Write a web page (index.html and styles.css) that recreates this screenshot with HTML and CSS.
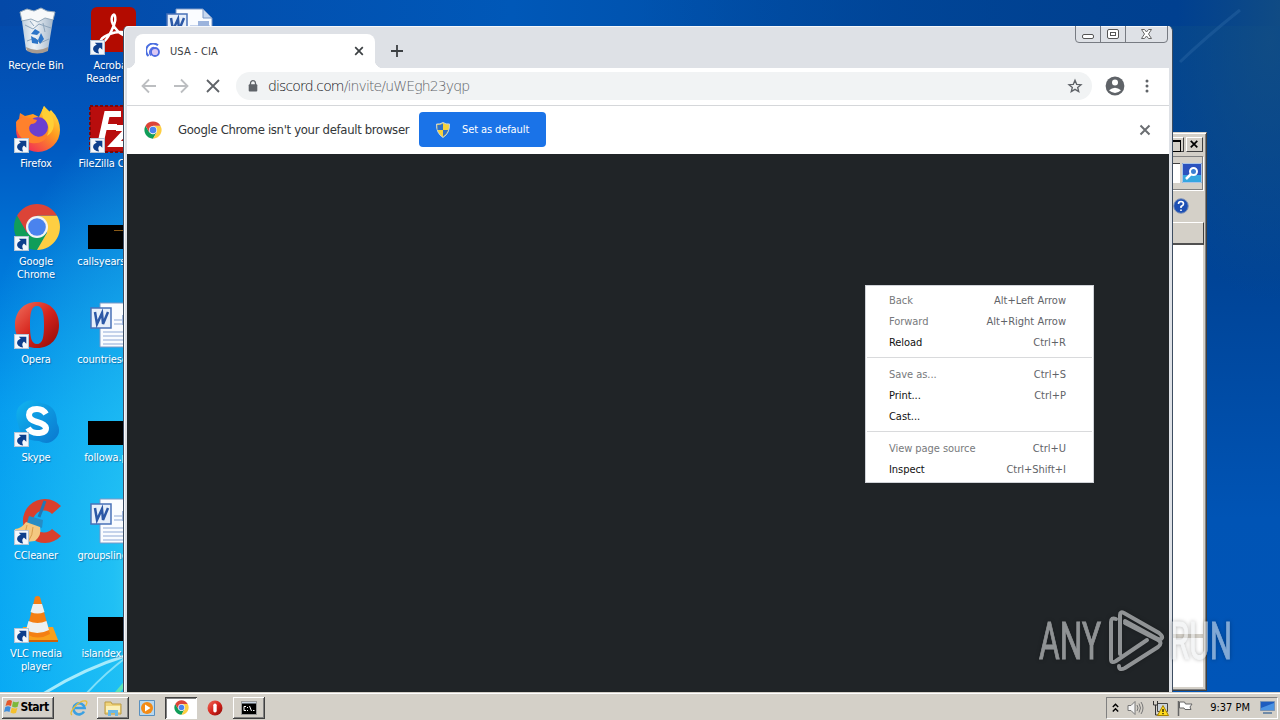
FILE: index.html
```
<!DOCTYPE html>
<html lang="en">
<head>
    <meta charset="utf-8">
    <title>USA - CIA</title>
    <link rel="stylesheet" href="styles.css">
</head>
<body>
    <svg class="defs" width="0" height="0">
        <defs>
            <symbol id="shortcut" viewBox="0 0 14 14">
                <path d="M0 0h14v14H0z" fill="#f4f8fc"/>
                <path d="M.5.5h13v13H.5z" fill="none" stroke="#b5c5d6"/>
                <path d="M4.500 2.500H11.500V9L9.300 7C7.500 8.500 7.300 10 8.500 12.500 5 12.500 2.300 10 3 7.500c.4-1.600 1.700-2.500 3.300-3z" fill="#0d3f8c"/>
            </symbol>
            <symbol id="chrome" viewBox="0 0 48 48">
                <path d="M4.100 12.500A23 23 0 0 0 24 47l10-17.300L24 35l-10-5.300z" fill="#109d59"/>
                <path d="M43.900 12.500H24l10 17.200L24 47A23 23 0 0 0 43.900 12.500z" fill="#fdce42"/>
                <path d="M24 12.500h19.900A23 23 0 0 0 4.100 12.500L14 29.700z" fill="#dc4437"/>
                <circle cx="24" cy="24" r="11" fill="#f3f3f3"/>
                <circle cx="24" cy="24" r="8.800" fill="#4a83ee"/>
            </symbol>
            <symbol id="word" viewBox="0 0 48 48">
                <path d="M11 2h27l9 9v35H11z" fill="#fafcff" stroke="#7b98c6"/>
                <path d="M38 2l9 9h-9z" fill="#c8d8ef" stroke="#7b98c6"/>
                <path d="M25 19h20M25 23h20M14 31h31M14 35h31M14 39h31M14 43h31" stroke="#8fa9d6"/>
                <path d="M33 14h11v10H33z" fill="#9bb3dc"/>
                <path d="M2 7h20v20H2z" fill="#e7effa" stroke="#4a72b8" stroke-width="1.500"/>
                <path d="M6 11l2 12 5-11 1 11 5-12" fill="none" stroke="#2c58a6" stroke-width="2.500"/>
            </symbol>
            <linearGradient id="fire" x1="1" y1="0" x2=".2" y2="1">
                <stop offset="0" stop-color="#fff14a"/><stop offset=".45" stop-color="#ff9a1f"/><stop offset="1" stop-color="#f0225d"/>
            </linearGradient>
            <linearGradient id="red" x1="0" y1="0" x2="1" y2="1">
                <stop offset="0" stop-color="#f0705e"/><stop offset=".5" stop-color="#d6241c"/><stop offset="1" stop-color="#8d0a08"/>
            </linearGradient>
            <linearGradient id="skype" x1="0" y1="0" x2="1" y2="1">
                <stop offset="0" stop-color="#10b4f0"/><stop offset="1" stop-color="#0a78cf"/>
            </linearGradient>
            <linearGradient id="bin" x1="0" y1="0" x2="1" y2="0">
                <stop offset="0" stop-color="#b9cbdc"/><stop offset=".4" stop-color="#f0f4f7"/><stop offset="1" stop-color="#9fb3c8"/>
            </linearGradient>
        </defs>
    </svg>

    <div class="desktop">
        <svg class="streaks" viewBox="0 0 1280 692">
            <path d="M40 696Q80 670 128 655" stroke="#a5ebfc" stroke-width="3"/>
            <path d="M86 694Q104 674 128 656" stroke="#7fe0fa" stroke-width="2"/>
            <path d="M116 694l12-14" stroke="#5fe3b4" stroke-width="4"/>
            <path d="M1180 62Q1205 38 1240 10" stroke="#2a66a3" stroke-width="3" opacity=".45"/>
        </svg>

        <div class="icons">
            <div class="icon">
                <svg viewBox="0 0 48 48">
                    <path d="M8 7l5 36q11 5 22 0l6-36z" fill="url(#bin)"/>
                    <path d="M7 5l7-3 7 2 7-3 6 3 8 1-2 8-8-2-7 4-7-3-9 2z" fill="#f7f9fa" stroke="#94a9ba"/>
                    <path d="M12 18l8 4 6-5 12 4M14 34l8-3 5 5 9-4M30 16l2 9M17 14l4 5" fill="none" stroke="#8ca4bb"/>
                    <path d="M18 27l4-5 5 3-3 3zM18 29l1 7 6 1v-4zM28 26l3 6-4 5-2-4z" fill="#2d75c8"/>
                    <path d="M13 40q11 6 22 0v4q-11 5-21 0z" fill="#a79b91"/>
                </svg>
                <span>Recycle Bin</span>
            </div>
            <div class="icon">
                <svg viewBox="0 0 48 48">
                    <path d="M31 1q3 4 4 7l3-3q9 9 9 20a22 22 0 0 1-44 0q0-8 3-11l1-6 5 3 8-2 6 3z" fill="url(#fire)"/>
                    <circle cx="25" cy="22" r="10" fill="#6b3fd0"/>
                    <path d="M3 17q4-6 13-4l8 2q-1 4-6 4-4 4 0 9 7 7 17 2-5 10-17 8Q3 34 3 17z" fill="#ff812c"/>
                    <path d="M31 1q-5 9 2 15 5 7 1 15 12-8 3-24z" fill="#ffcf35"/>
                </svg>
                <svg class="arrow"><use href="#shortcut"/></svg>
                <span>Firefox</span>
            </div>
            <div class="icon">
                <svg><use href="#chrome"/></svg>
                <svg class="arrow"><use href="#shortcut"/></svg>
                <span>Google<br>Chrome</span>
            </div>
            <div class="icon">
                <svg viewBox="0 0 48 48">
                    <path fill-rule="evenodd" d="M24 1C10 1 2 11 2 24s8 23 22 23 22-10 22-23S38 1 24 1zm0 4c6 0 7 8 7 19s-1 19-7 19-7-8-7-19 1-19 7-19z" fill="url(#red)"/>
                </svg>
                <svg class="arrow"><use href="#shortcut"/></svg>
                <span>Opera</span>
            </div>
            <div class="icon">
                <svg viewBox="0 0 48 48">
                    <path d="M14 2q8-2 14 2 16 2 16 20 5 9-2 16-7 7-16 2Q8 42 5 25-1 8 14 2z" fill="url(#skype)"/>
                    <path d="M33 15q-3-5-9-5-8 0-8 6 0 5 8 7t9 6q0 5-9 5-6 0-9-5" fill="none" stroke="#fff" stroke-width="6"/>
                </svg>
                <svg class="arrow"><use href="#shortcut"/></svg>
                <span>Skype</span>
            </div>
            <div class="icon">
                <svg viewBox="0 0 48 48">
                    <path d="M48 9A22 22 0 1 0 48 39l-9-7a11 11 0 1 1 0-15z" fill="#d9402d"/>
                    <path d="M32 4l-6 16" stroke="#2277b4" stroke-width="3"/>
                    <path d="M16 19l14 4-1 8-15-5z" fill="#278cc4"/>
                    <path d="M13 25l14 5q2 8-5 14l-18 2Q0 38 2 32q6 0 11-7z" fill="#f4c880"/>
                    <path d="M14 28q-1 10-6 16M20 30q0 8-5 15" fill="none" stroke="#d79c4c"/>
                </svg>
                <svg class="arrow"><use href="#shortcut"/></svg>
                <span>CCleaner</span>
            </div>
            <div class="icon">
                <svg viewBox="0 0 48 48">
                    <path d="M10 32h30l5 13H6z" fill="#f9a01c"/>
                    <path d="M6 45h39v2H6z" fill="#d06209"/>
                    <path d="M22 2q2.500-2 5 0l10 37q-12 7-24 0z" fill="#f47f13"/>
                    <path d="M20 9h9l2.500 8q-7 3-14 0zM15.500 26q9 4 18 0l2.500 9q-12 6-23 0z" fill="#edf0f0"/>
                </svg>
                <svg class="arrow"><use href="#shortcut"/></svg>
                <span>VLC media<br>player</span>
            </div>

            <div class="icon">
                <svg viewBox="0 0 48 48">
                    <rect x="2" width="45" height="45" rx="6" fill="#b30b00"/>
                    <path d="M13 35c-5-2 6-9 17-10s10 6 4 3S21 16 23 10s5 0 2 8-9 18-12 17z" fill="none" stroke="#fff" stroke-width="2.500"/>
                </svg>
                <svg class="arrow"><use href="#shortcut"/></svg>
                <span>Acrobat<br>Reader DC</span>
            </div>
            <div class="icon">
                <svg viewBox="0 0 48 48">
                    <path d="M1 1h46v46H1z" fill="#b80d0d" stroke="#7e0808" stroke-width="2" stroke-dasharray="3 2"/>
                    <path d="M32 9H18l-6 27M15 22h13M27 23h13L25 39h15" fill="none" stroke="#fff" stroke-width="6"/>
                </svg>
                <svg class="arrow"><use href="#shortcut"/></svg>
                <span>FileZilla Client</span>
            </div>
            <div class="icon">
                <div class="thumb"><i></i></div>
                <span>callsyears.png</span>
            </div>
            <div class="icon">
                <svg><use href="#word"/></svg>
                <span>countriesco.rtf</span>
            </div>
            <div class="icon">
                <div class="thumb"></div>
                <span>followa.png</span>
            </div>
            <div class="icon">
                <svg><use href="#word"/></svg>
                <span>groupslines.rtf</span>
            </div>
            <div class="icon">
                <div class="thumb"></div>
                <span>islandex.png</span>
            </div>

            <div class="icon">
                <svg><use href="#word"/></svg>
            </div>
        </div>

        <div class="explorer">
            <div class="explorer-title">
                <b class="max"></b>
                <b class="x"><svg viewBox="0 0 16 15"><path d="M4 3l7 7M11 3l-7 7" stroke="#000" stroke-width="1.800"/></svg></b>
            </div>
            <div class="explorer-search">
                <i></i>
                <svg viewBox="0 0 20 20">
                    <path d="M0 0h20v20H0z" fill="#2b52be"/><path d="M0 12h20v8H0z" fill="#36a6e0"/>
                    <path d="M.5.5h19v19H.5z" fill="none" stroke="#a9c3e6"/>
                    <path d="M9 11l-5 5" stroke="#fff" stroke-width="2.500"/>
                    <circle cx="11.500" cy="8.500" r="3.500" fill="#3b7fd2" stroke="#fff" stroke-width="2"/>
                </svg>
            </div>
            <div class="explorer-help">
                <svg viewBox="0 0 16 16">
                    <circle cx="8" cy="8" r="7.300" fill="#1d4fb4" stroke="#8094b8"/>
                    <path d="M5.500 6q0-2.500 2.500-2.500T10.500 6Q10.500 7.300 8 8.500V10M8 11.500V13" fill="none" stroke="#fff" stroke-width="1.600"/>
                </svg>
            </div>
            <div class="explorer-head"></div>
            <div class="explorer-body"></div>
            <div class="explorer-status"></div>
        </div>

        <div class="browser">
            <div class="tabs">
                <div class="tab">
                    <svg width="16" height="16" viewBox="0 0 16 16" fill="none">
                        <path d="M2.500 13A6.700 6.700 0 0 1 12 2.300" stroke="#4a6ee0" stroke-width="2"/>
                        <path d="M5 12.500A4.800 4.800 0 0 1 8 4.500" stroke="#5b72e8" stroke-width="1.600"/>
                        <circle cx="9" cy="9" r="4" fill="#dcc8f3" stroke="#4f6be2" stroke-width="1.800"/>
                    </svg>
                    <span>USA - CIA</span>
                    <svg width="10" height="10" viewBox="0 0 10 10"><path d="M1.200 1.200l7.600 7.600M8.800 1.200L1.200 8.800" stroke="#3c4043" stroke-width="1.700"/></svg>
                </div>
                <svg class="plus" width="12" height="12" viewBox="0 0 12 12"><path d="M6 0v12M0 6h12" stroke="#3c4043" stroke-width="1.800"/></svg>
                <svg class="controls" width="93" height="17" viewBox="0 0 93 17" fill="none" stroke="#777b82">
                    <path d="M.5 0v13q0 3.500 3.500 3.500h85q3.500 0 3.500-3.500V0M25.500 0v16M50.500 0v16"/>
                    <rect x="7.500" y="8.500" width="11" height="4" rx="1.500" fill="#fff" stroke="#555"/>
                    <rect x="32.500" y="3.500" width="11" height="9" rx="1.500" fill="#fff" stroke="#555"/>
                    <rect x="35.500" y="6.500" width="5" height="3" stroke="#555"/>
                    <path d="M66.500 3.500h3l2 2.500 2-2.500h3L73.500 8l3 4.500h-3l-2-2.500-2 2.500h-3l3-4.500z" fill="#fff" stroke="#666"/>
                </svg>
            </div>
            <div class="toolbar">
                <svg width="16" height="16" viewBox="0 0 16 16"><path d="M15 8H2M8 1.500L1.500 8 8 14.500" fill="none" stroke="#bcbec1" stroke-width="1.800"/></svg>
                <svg width="16" height="16" viewBox="0 0 16 16"><path d="M1 8h13M8 1.500L14.500 8 8 14.500" fill="none" stroke="#bcbec1" stroke-width="1.800"/></svg>
                <svg width="16" height="16" viewBox="0 0 16 16"><path d="M2 2l12 12M14 2L2 14" stroke="#5f6368" stroke-width="1.800"/></svg>
                <div class="omnibox">
                    <svg width="10" height="12" viewBox="0 0 10 12"><path d="M2.500 5V3.200a2.500 2.500 0 0 1 5 0V5" fill="none" stroke="#5f6368" stroke-width="1.300"/><rect x=".7" y="4.300" width="8.600" height="7.200" rx="1" fill="#5f6368"/></svg>
                    <span class="url"><b>discord.com</b>/invite/uWEgh23yqp</span>
                    <svg width="16" height="16" viewBox="0 0 24 24"><path d="M12 3.500l2.500 6 6.500.5-5 4.200 1.600 6.300L12 17.100l-5.600 3.400L8 14.200 3 10l6.500-.5z" fill="none" stroke="#5f6368" stroke-width="2"/></svg>
                </div>
                <svg width="20" height="20" viewBox="0 0 20 20"><circle cx="10" cy="10" r="9.400" fill="#5f6368"/><circle cx="10" cy="6.600" r="3" fill="#fff"/><path d="M4 14.300q6-5 12 0-6 5.500-12 0z" fill="#fff"/></svg>
                <svg width="4" height="14" viewBox="0 0 4 14" fill="#5f6368"><circle cx="2" cy="2" r="1.500"/><circle cx="2" cy="7" r="1.500"/><circle cx="2" cy="12" r="1.500"/></svg>
            </div>
            <div class="infobar">
                <svg width="18" height="18"><use href="#chrome"/></svg>
                <span class="info-text">Google Chrome isn't your default browser</span>
                <button class="default-btn">
                    <svg width="14" height="16" viewBox="0 0 14 16">
                        <path d="M7 .5q3 2 6.500 1.500Q14 11 7 15.500 0 11 .5 2 4 2.500 7 .5z" fill="#f7d33c" stroke="#c5d3df"/>
                        <path d="M7 1.500V8H1.500L1.300 3Q4 3.200 7 1.500zM7 8h5.200Q11 12 7 14.500z" fill="#2e71c9"/>
                    </svg>
                    <span>Set as default</span>
                </button>
                <svg class="close" width="12" height="12" viewBox="0 0 12 12"><path d="M1.500 1.500l9 9M10.500 1.500l-9 9" stroke="#6b6e72" stroke-width="2"/></svg>
            </div>
            <div class="page"></div>
        </div>

        <div class="menu">
            <div class="item off"><span>Back</span><kbd>Alt+Left Arrow</kbd></div>
            <div class="item off"><span>Forward</span><kbd>Alt+Right Arrow</kbd></div>
            <div class="item"><span>Reload</span><kbd>Ctrl+R</kbd></div>
            <hr>
            <div class="item off"><span>Save as...</span><kbd>Ctrl+S</kbd></div>
            <div class="item"><span>Print...</span><kbd>Ctrl+P</kbd></div>
            <div class="item"><span>Cast...</span></div>
            <hr>
            <div class="item off"><span>View page source</span><kbd>Ctrl+U</kbd></div>
            <div class="item"><span>Inspect</span><kbd>Ctrl+Shift+I</kbd></div>
        </div>

        <svg class="watermark" width="210" height="68" viewBox="0 0 210 68">
            <text x="2" y="51" textLength="62" lengthAdjust="spacingAndGlyphs">ANY</text>
            <text x="133" y="51" textLength="62" lengthAdjust="spacingAndGlyphs">RUN</text>
            <path d="M83 46V7q0-4 4-2l35 20q5 4 2 6-2 1-5-1L88 13M79 11q-5-2-5 3v37q0 5 5 2l31-21M82 58q0 5 6 2l33-21q5-4 0-7L88 15"/>
        </svg>
    </div>

    <div class="taskbar">
        <button class="start">
            <svg width="16" height="16" viewBox="0 0 16 16">
                <path d="M3 2q3-2 5 0L7 7Q4 5.500 1.500 7z" fill="#e4572b"/><path d="M9 2.500q3 1.500 6 0L13.500 8q-3 1-5.500-.5z" fill="#7db83a"/>
                <path d="M1.300 8Q4 6.500 6.700 8l-1.200 5Q3 11.500 0 13z" fill="#3f8ddb"/><path d="M7.800 8.500q3 1.500 5.600.5L12 14q-3 1-5.500-.5z" fill="#f5c02d"/>
            </svg>
            <span>Start</span>
        </button>
        <div class="task">
            <svg width="18" height="18" viewBox="0 0 18 18" fill="none"><path d="M14 12.500A5.600 5.600 0 1 1 14.600 9H5" stroke="#3aa0e2" stroke-width="2.600"/><path d="M2 16Q-1 14 5 7.500T16 2q2 1-.5 5" stroke="#e8bd34" stroke-width="1.300"/></svg>
        </div>
        <div class="task raised">
            <svg width="18" height="18" viewBox="0 0 18 18"><path d="M1 3h6l1 2h9v10H1z" fill="#efd37a" stroke="#bd9b43"/><path d="M2 7h14v6H2z" fill="#fbf0b8"/><path d="M4 17v-6h10v6h-3v-3H7v3z" fill="#6bb8e6"/></svg>
        </div>
        <div class="task">
            <svg width="16" height="16" viewBox="0 0 16 16"><path d="M.5.5h15v15H.5z" fill="#b8d8ef" stroke="#5990bf"/><circle cx="8" cy="8" r="6" fill="#f38b16"/><path d="M6 4.500v7l5.500-3.500z" fill="#fff"/></svg>
        </div>
        <div class="task pressed">
            <svg width="15" height="15"><use href="#chrome"/></svg>
        </div>
        <div class="task">
            <svg width="16" height="16" viewBox="0 0 16 16"><circle cx="8" cy="8" r="7.500" fill="url(#red)"/><rect x="6.300" y="3.500" width="3.400" height="9" rx="1.700" fill="#fff"/></svg>
        </div>
        <div class="task raised">
            <svg width="16" height="14" viewBox="0 0 16 14"><path d="M.5.5h15v13H.5z" fill="#000" stroke="#999"/><path d="M1 1h14v1.500H1z" fill="#c9d5e3"/><path d="M5 5.500H3v4h2M6.500 6v1M6.500 9v1M8.500 5l2 5M12 9.500h1.500" fill="none" stroke="#fff"/></svg>
        </div>

        <div class="tray">
            <svg width="7" height="10" viewBox="0 0 7 10" fill="none" stroke="#000" stroke-width="1.400"><path d="M.8 4L3.500 1.300 6.200 4M.8 8.500L3.500 5.800 6.200 8.500"/></svg>
            <svg width="17" height="16" viewBox="0 0 17 16"><path d="M1 5.500h3l4-4v13l-4-4H1z" fill="#f5f5f5" stroke="#777"/><path d="M10 5q2 3 0 6M12 3.500q3 4.500 0 9M14 2q4 6 0 12" fill="none" stroke="#777"/></svg>
            <svg width="17" height="16" viewBox="0 0 17 16"><path d="M5.500 3.500h10v8h-10z" fill="#cbd4dc" stroke="#444"/><path d="M1.500 1v4h4V1M3.500 5v10h4" fill="none" stroke="#333"/><path d="M11 5.500l5.500 10h-11z" fill="#ffda1c" stroke="#a78200"/><path d="M11 9v3M11 13v1.300" stroke="#000" stroke-width="1.200"/></svg>
            <svg width="16" height="16" viewBox="0 0 16 16"><path d="M1.500 1v15" stroke="#666" stroke-width="1.500"/><path d="M2.500 2h5l1 2h6.500l-2 3 1 2.500H8L7 8H2.500z" fill="#fff" stroke="#666"/></svg>
            <span class="clock">9:37 PM</span>
            <svg width="15" height="13" viewBox="0 0 15 13"><path d="M.5.5h14v9H.5z" fill="#1d5cbf" stroke="#7893b5"/><path d="M1 7L14 2v7H1z" fill="#4b93e2"/><path d="M3 12h9" stroke="#51749c" stroke-width="1.500"/></svg>
        </div>
    </div>
</body>
</html>
```

FILE: styles.css
```
* {
    box-sizing: border-box;
}
body {
    margin: 0;
    width: 1280px;
    height: 720px;
    overflow: hidden;
    display: flex;
    flex-direction: column;
    font-family: "DejaVu Sans Condensed", "DejaVu Sans", sans-serif;
    font-size: 11px;
    font-stretch: condensed;
}
svg {
    display: block;
    flex: none;
}
button {
    font: inherit;
    border: none;
}
.defs {
    position: absolute;
}
.desktop {
    position: relative;
    height: 692px;
    overflow: hidden;
    background:
        linear-gradient(90deg, transparent 50%, #004090 92%, #104b84 100%) 0 0 / 100% 26px no-repeat,
        radial-gradient(ellipse 130px 260px at 1270px 40px, rgba(20, 78, 130, 0.8), rgba(0, 67, 143, 0)),
        linear-gradient(90deg, #0449a8, #0058b8 40%, #004a9f 70%, #00438f) 0 0 / 100% 26px no-repeat,
        radial-gradient(ellipse 250px 500px at 200px 580px, #55e0f0 0%, rgba(40, 200, 245, 0.8) 35%, rgba(0, 150, 236, 0) 100%),
        linear-gradient(180deg, #0449a8 0%, #0058c0 20%, #0077d9 38%, #0096ee 60%, #00a2f4 100%) 0 0 / 600px 100% no-repeat,
        linear-gradient(180deg, #00438f 0%, #004497 40%, #0054b5 75%, #0055b8 100%);
}
.streaks {
    position: absolute;
    inset: 0;
    fill: none;
}

/* desktop icons */
.icons {
    position: relative;
    display: grid;
    grid-template-rows: repeat(7, 98px);
    grid-auto-flow: column;
    grid-auto-columns: 76px;
    width: 228px;
    margin-left: -2px;
}
.icon {
    position: relative;
    display: flex;
    flex-direction: column;
    align-items: center;
    padding-top: 7px;
    color: white;
    line-height: 13px;
    text-align: center;
    text-shadow: 1px 1px 1px rgba(0, 30, 80, 0.4);
}
.icon > svg {
    width: 48px;
    height: 48px;
    margin-left: 1px;
}
.icon span {
    margin-top: 4px;
    letter-spacing: -0.15px;
    white-space: nowrap;
}
.icon .arrow {
    position: absolute;
    left: 15px;
    top: 40px;
    width: 15px;
    height: 15px;
}
.thumb {
    width: 48px;
    height: 24px;
    margin: 22px 0 2px;
    background: #000;
}
.thumb i {
    display: block;
    width: 20px;
    height: 6px;
    margin-left: 26px;
    border-bottom: 1px solid #8a5a17;
}

/* window behind the browser */
.explorer {
    position: absolute;
    left: 1100px;
    top: 132px;
    width: 107px;
    height: 559px;
    background: #d4d0c8;
    border: 1px solid #d4d0c8;
    border-right-color: #404040;
    border-bottom-color: #404040;
    box-shadow: inset 1px 1px #fff, inset -1px -1px #808080;
    padding: 3px 2px 3px 3px;
    display: flex;
    flex-direction: column;
}
.explorer-title {
    display: flex;
    justify-content: flex-end;
    gap: 2px;
    height: 20px;
    padding: 1px 1px 0 0;
}
.explorer-title b {
    width: 17px;
    height: 15px;
    background: #d4d0c8;
    border: 1px solid #fff;
    border-right-color: #404040;
    border-bottom-color: #404040;
}
.explorer-title .max {
    padding: 2px;
}
.explorer-title .max::before {
    content: "";
    display: block;
    height: 9px;
    border: 1px solid #000;
    border-top-width: 2px;
}
.explorer-search {
    display: flex;
    justify-content: flex-end;
    gap: 2px;
    height: 34px;
    margin-right: 1px;
    padding: 6px 0 0;
    border: 1px solid #808080;
    box-shadow: 1px 1px #fff;
}
.explorer-search i {
    width: 40px;
    height: 20px;
    background: #fff;
    border-top: 1px solid #404040;
}
.explorer-search svg {
    width: 20px;
    height: 20px;
}
.explorer-help {
    height: 32px;
    padding: 8px 15px 0 0;
}
.explorer-help svg {
    width: 16px;
    margin-left: auto;
}
.explorer-head {
    height: 23px;
    border-top: 1px solid #fff;
    border-right: 1px solid #404040;
    border-bottom: 2px solid #505050;
}
.explorer-body {
    flex: 1;
    margin-right: 1px;
    background: #fff;
    border-bottom: 4px solid #d4d0c8;
}
.explorer-status {
    height: 49px;
    margin-right: 1px;
    background: #fff;
}

/* browser window */
.browser {
    position: absolute;
    left: 123px;
    top: 26px;
    width: 1050px;
    height: 667px;
    padding: 0 3px;
    display: flex;
    flex-direction: column;
    background: #dee1e6;
    border: 1px solid #3d4d61;
    border-width: 0 1px;
    border-radius: 5px 5px 0 0;
    box-shadow: inset 1px 1px #f5f7fa;
}
.tabs {
    display: flex;
    height: 42px;
    padding: 0 1px 0 8px;
    align-items: flex-start;
}
.tab {
    position: relative;
    display: flex;
    align-items: center;
    width: 240px;
    height: 34px;
    margin-top: 8px;
    padding: 0 11px;
    background: #fff;
    border-radius: 8px 8px 0 0;
    color: #3c4043;
}
.tab::before,
.tab::after {
    content: "";
    position: absolute;
    bottom: 0;
    width: 8px;
    height: 8px;
}
.tab::before {
    left: -8px;
    background: radial-gradient(circle at 0 0, transparent 8px, #fff 8.5px);
}
.tab::after {
    right: -8px;
    background: radial-gradient(circle at 100% 0, transparent 8px, #fff 8.5px);
}
.tab span {
    flex: 1;
    margin-left: 8px;
    letter-spacing: 0.1px;
}
.plus {
    margin: 19px auto 0 16px;
}
.toolbar {
    display: flex;
    align-items: center;
    gap: 16px;
    height: 38px;
    padding: 0 20px 2px 14px;
    background: #fff;
    border-bottom: 1px solid #d5d7da;
}
.omnibox {
    flex: 1;
    display: flex;
    align-items: center;
    height: 28px;
    margin: 0 -3px 0 -1px;
    padding: 0 9px 0 12px;
    border-radius: 14px;
    background: #f1f3f4;
}
.toolbar > svg:last-child {
    margin-left: 4px;
}
.url {
    flex: 1;
    margin-left: 10px;
    font-family: "DejaVu Sans", sans-serif;
    font-weight: 200;
    font-size: 14px;
    letter-spacing: -0.86px;
    color: #5f6368;
}
.url b {
    font-weight: 200;
    color: #101114;
}
.infobar {
    display: flex;
    align-items: center;
    height: 48px;
    padding: 0 18px 1px 17px;
    background: #fff;
    font-size: 13px;
    color: #333639;
}
.info-text {
    width: 229px;
    margin-left: 16px;
    letter-spacing: -0.33px;
    white-space: nowrap;
}
.default-btn {
    display: flex;
    align-items: center;
    width: 127px;
    height: 35px;
    margin-left: 12px;
    padding: 0 17px;
    gap: 12px;
    border-radius: 4px;
    background: #1a73e8;
    color: #fff;
    font-size: 11px;
    letter-spacing: -0.1px;
    white-space: nowrap;
}
.close {
    margin-left: auto;
}
.page {
    flex: 1;
    background: #202427;
}

/* context menu */
.menu {
    position: absolute;
    left: 865px;
    top: 285px;
    width: 229px;
    height: 198px;
    padding: 4px 0;
    background: #fff;
    border: 1px solid #d0d3d8;
}
.item {
    display: flex;
    justify-content: space-between;
    align-items: center;
    height: 21px;
    padding: 0 27px 0 23px;
    color: #111;
}
.item kbd {
    font: inherit;
    color: #5f6368;
}
.item span {
    letter-spacing: -0.05px;
}
.off {
    color: #77797c;
}
.menu hr {
    height: 1px;
    margin: 4px 1px 6px;
    border: none;
    background: #d9dadc;
}

.watermark {
    position: absolute;
    left: 1037px;
    top: 608px;
    opacity: 0.55;
    filter: drop-shadow(0 0 2px rgba(0, 0, 0, 0.5));
}
.watermark text {
    font: 51px Roboto, sans-serif;
    fill: #eceeef;
    stroke: #eceeef;
    stroke-width: 1px;
}
.watermark path {
    fill: none;
    stroke: #eceeef;
    stroke-width: 4;
    stroke-linecap: round;
}

/* taskbar */
.taskbar {
    display: flex;
    align-items: center;
    height: 28px;
    padding: 3px 2px 1px;
    background: #d4d0c8;
    border-top: 1px solid #d4d0c8;
    box-shadow: inset 0 1px #fff;
}
.start,
.task {
    display: flex;
    align-items: center;
    justify-content: center;
    width: 32px;
    height: 22px;
    margin-right: 2px;
}
.start,
.raised {
    background: #d4d0c8;
    box-shadow: inset -1px -1px #404040, inset 1px 1px #fff, inset -2px -2px #808080;
}
.start {
    width: 52px;
    margin-right: 9px;
    padding: 0 3px 2px 0;
    font-size: 12px;
    font-weight: bold;
    letter-spacing: -0.5px;
}
.pressed {
    background: #fff;
    box-shadow: inset 1px 1px #404040, inset -1px -1px #fff, inset 2px 2px #808080;
}
.tray {
    display: flex;
    align-items: center;
    width: 172px;
    height: 22px;
    margin-left: auto;
    padding: 0 2px 0 5px;
    gap: 8px;
    border: 1px solid #808080;
    border-right-color: #fff;
    border-bottom-color: #fff;
}
.clock {
    margin: 0 2px 0 auto;
}
```
